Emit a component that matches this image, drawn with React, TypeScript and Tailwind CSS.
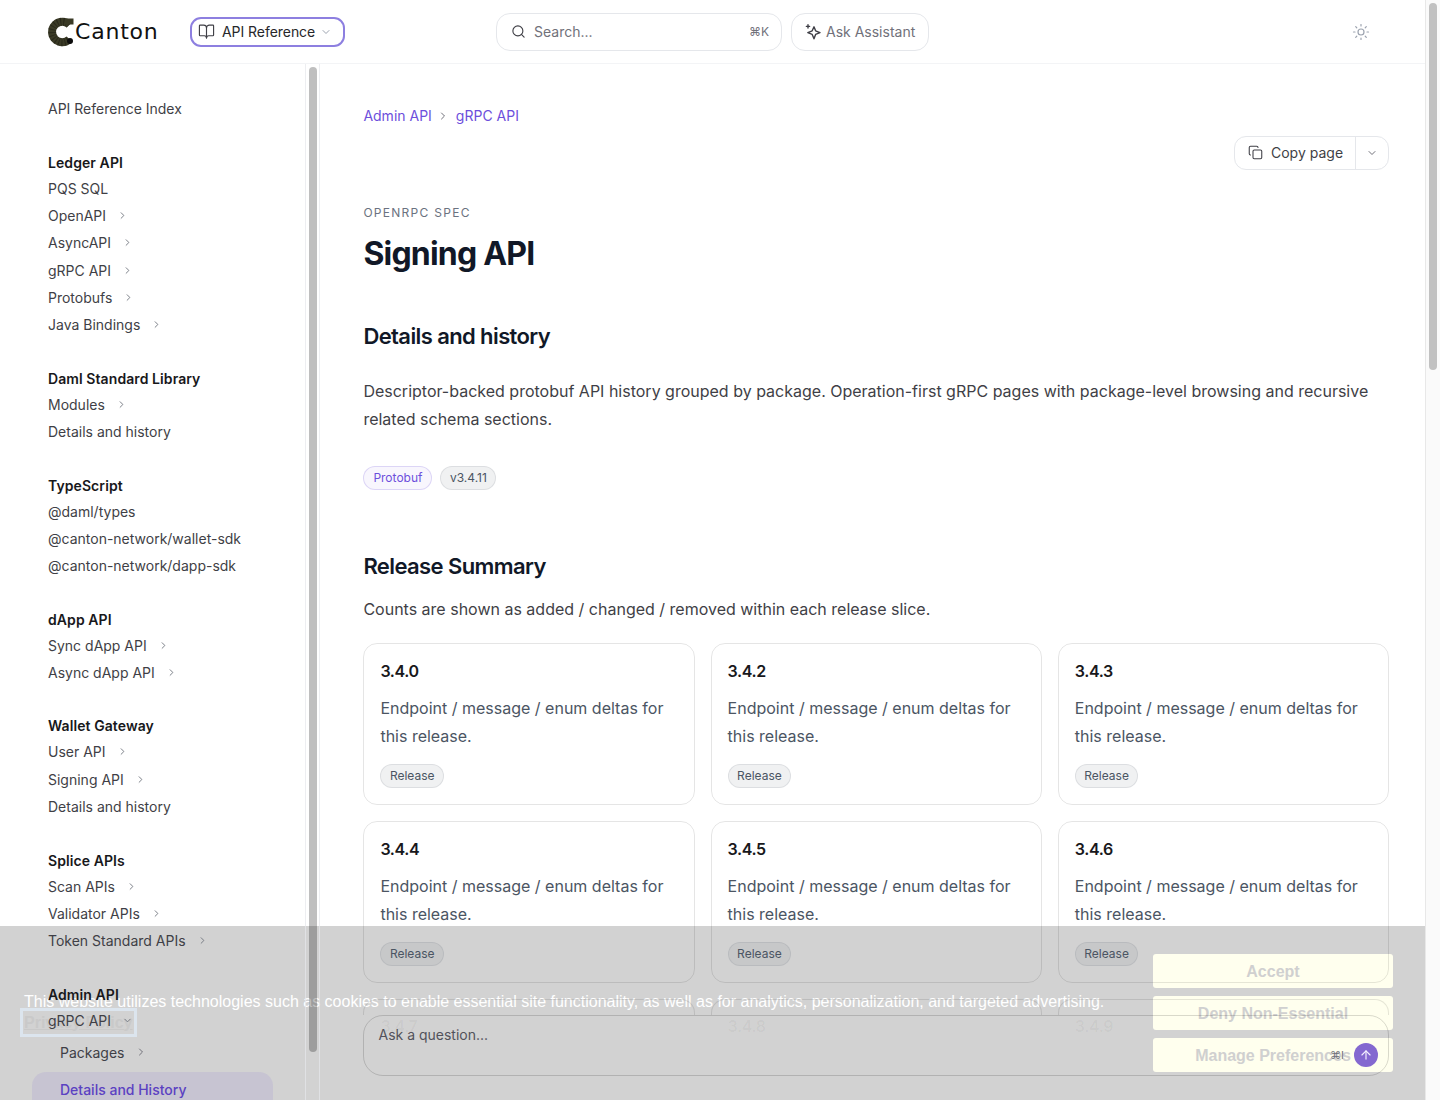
import { ArrowUp, BookOpen, ChevronDown, ChevronRight, Copy, Search, Sun } from "lucide-react";

type Item = { label: string; chev?: boolean };
type Section = { title: string; gap: string; items: Item[] };

const sections: Section[] = [
  { title: "Ledger API", gap: "mt-[27.7px]", items: [{ label: "PQS SQL" }, { label: "OpenAPI", chev: true }, { label: "AsyncAPI", chev: true }, { label: "gRPC API", chev: true }, { label: "Protobufs", chev: true }, { label: "Java Bindings", chev: true }] },
  { title: "Daml Standard Library", gap: "mt-[27.7px]", items: [{ label: "Modules", chev: true }, { label: "Details and history" }] },
  { title: "TypeScript", gap: "mt-[28.2px]", items: [{ label: "@daml/types" }, { label: "@canton-network/wallet-sdk" }, { label: "@canton-network/dapp-sdk" }] },
  { title: "dApp API", gap: "mt-[27.7px]", items: [{ label: "Sync dApp API", chev: true }, { label: "Async dApp API", chev: true }] },
  { title: "Wallet Gateway", gap: "mt-[27.2px]", items: [{ label: "User API", chev: true }, { label: "Signing API", chev: true }, { label: "Details and history" }] },
  { title: "Splice APIs", gap: "mt-[28.2px]", items: [{ label: "Scan APIs", chev: true }, { label: "Validator APIs", chev: true }, { label: "Token Standard APIs", chev: true }] },
];

function NavRow({ item }: { item: Item }) {
  return (
    <div className="flex h-[27.2px] items-center gap-[11px] text-[14px] text-[#3f3f46]">
      <span>{item.label}</span>
      {item.chev && <ChevronRight className="h-[11px] w-[11px] text-[#71757e]" strokeWidth={2} />}
    </div>
  );
}

function Heading({ children }: { children: string }) {
  return <div className="flex h-[24.8px] items-center text-[14px] font-semibold tracking-[0.08px] text-[#18181b]">{children}</div>;
}

function Logo() {
  return (
    <div className="flex items-center">
      <svg width="28" height="30" viewBox="0 0 28 30" fill="none" className="overflow-visible">
        <path d="M21.5 7.8 A10.2 10.2 0 1 0 21.5 22.2" stroke="#3a3a26" strokeWidth="8" fill="none" />
        <path d="M21.5 7.8 A10.2 10.2 0 1 0 21.5 22.2" stroke="#1b1b12" strokeWidth="8" strokeDasharray="1 2" fill="none" opacity="0.55" />
        <rect x="17" y="1.5" width="8.5" height="6" fill="#3a3a26" />
        <circle cx="22" cy="24" r="3" fill="#0d0d0d" />
      </svg>
      <span className="ml-[-1px] pt-[1px] font-['DejaVu_Sans'] text-[22px] leading-none tracking-[0.8px] text-[#111]">Canton</span>
    </div>
  );
}

function Header() {
  return (
    <header className="flex h-[64px] shrink-0 items-center border-b border-[#f3f4f6] bg-white pl-[48px]">
      <div className="w-[142px]"><Logo /></div>
      <button className="flex h-[30px] w-[155px] items-center rounded-[11px] border-2 border-[#8d7fe0] pl-[6px] text-[14px] tracking-[-0.05px] text-[#27272a]">
        <BookOpen className="h-[17px] w-[17px] text-[#3f3f46]" strokeWidth={1.6} />
        <span className="ml-[7px]">API Reference</span>
        <ChevronDown className="ml-[5px] h-[12px] w-[12px] text-[#9ca3af]" />
      </button>
      <div className="ml-[151px] flex h-[38px] w-[286px] items-center rounded-[14px] border border-[#e5e7eb] pl-[14px] pr-[12px] text-[14px] text-[#71717a]">
        <Search className="h-[15px] w-[15px] text-[#3f3f46]" strokeWidth={1.8} />
        <span className="ml-[8px] flex-1">Search...</span>
        <span className="text-[12px] text-[#71717a]">⌘K</span>
      </div>
      <div className="ml-[9px] flex h-[38px] w-[138px] items-center rounded-[14px] border border-[#e5e7eb] pl-[13px] text-[14px] text-[#71717a]">
        <svg width="16" height="16" viewBox="0 0 16 16" fill="none" stroke="#3f3f46" strokeWidth="1.4" strokeLinejoin="round" strokeLinecap="round">
          <path d="M9 2.8 L10.6 6.8 L15 8.6 L10.6 10.4 L9 14.8 L7.2 10.4 L2.8 8.6 L7.2 6.8 Z" />
          <path d="M3 0.8 V4 M1.4 2.4 H4.6" />
        </svg>
        <span className="ml-[5px]">Ask Assistant</span>
      </div>
      <Sun className="ml-[423px] h-[18px] w-[18px] text-[#9ca3af]" strokeWidth={1.6} />
    </header>
  );
}

function Sidebar() {
  return (
    <aside className="flex w-[320px] shrink-0 border-r border-[#e5e7eb]/70">
      <nav className="h-full w-[306px] shrink-0 overflow-hidden border-r border-[#e5e7eb]/70 pl-[48px] pt-[31.2px]">
        <div className="flex h-[27.2px] items-center text-[14px] text-[#3f3f46]">API Reference Index</div>
        {sections.map((s) => (
          <div key={s.title} className={s.gap}>
            <Heading>{s.title}</Heading>
            {s.items.map((i) => <NavRow key={i.label} item={i} />)}
          </div>
        ))}
        <div className="mt-[27.7px]">
          <Heading>Admin API</Heading>
          <NavRow item={{ label: "gRPC API" }} />
        </div>
        <div className="-mt-[27.2px] ml-[74px] flex h-[27.2px] items-center"><ChevronDown className="h-[11px] w-[11px] text-[#71757e]" /></div>
        <div className="flex h-[36.9px] items-center gap-[11px] pl-[12px] text-[14px] text-[#3f3f46]">
          <span>Packages</span>
          <ChevronRight className="h-[12px] w-[12px] text-[#71717a]" />
        </div>
        <div className="-ml-[16px] mt-px flex h-[44px] w-[241px] items-center rounded-[14px] bg-[#6d4fdc]/10 pb-[8px] pl-[28px] text-[14px] font-medium text-[#5b41c2]">Details and History</div>
      </nav>
      <div className="flex-1 pl-[2.5px] pt-[3px]">
        <div className="h-[985px] w-[8px] rounded-full bg-black/25" />
      </div>
    </aside>
  );
}

function Pill({ children }: { children: string }) {
  return <span className="inline-flex h-[24px] items-center rounded-full border border-[#6b7280]/15 bg-[#6b7280]/10 px-[8.5px] text-[12px] text-[#4b5563]">{children}</span>;
}

function Card({ v }: { v: string }) {
  return (
    <div className="h-[162px] rounded-[14px] border border-black/10 px-[16px] pt-[15px]">
      <div className="text-[16px] font-semibold leading-[24px] tracking-[-0.4px] text-[#18181b]">{v}</div>
      <p className="mt-[11px] text-[16px] leading-[28px] text-[#4b5563]">Endpoint / message / enum deltas for this release.</p>
      <div className="mt-[12px]"><Pill>Release</Pill></div>
    </div>
  );
}

function FadedCard({ v }: { v: string }) {
  return (
    <div className="h-[16px] rounded-t-[14px] border-x border-t border-black/10 px-[16px] pt-[14px]">
      <div className="text-[16px] font-semibold leading-[24px] tracking-[-0.4px] text-black/[0.04]">{v}</div>
    </div>
  );
}

function Main() {
  return (
    <main className="min-w-0 flex-1 pl-[43.4px] pr-[36px] pt-[41px]">
      <div className="flex h-[21px] items-center text-[14px] text-[#6d4fdc]">
        <span>Admin API</span>
        <ChevronRight className="ml-[5px] mr-[7px] h-[12px] w-[12px] text-[#71717a]" />
        <span>gRPC API</span>
      </div>
      <div className="mt-[10px] flex justify-end">
        <div className="flex h-[34px] w-[155px] items-center rounded-[12px] border border-[#e5e7eb] text-[14px] text-[#3f3f46]">
          <div className="flex h-full w-[121px] items-center border-r border-[#e5e7eb] pb-[1px] pl-[13px]">
            <Copy className="h-[15px] w-[15px] text-[#3f3f46]" strokeWidth={1.7} />
            <span className="ml-[8px]">Copy page</span>
          </div>
          <div className="flex flex-1 justify-center"><ChevronDown className="h-[12px] w-[12px] text-[#71717a]" /></div>
        </div>
      </div>
      <div className="mt-[35px] text-[12px] leading-[16px] tracking-[1.28px] text-[#6b7280]">OPENRPC SPEC</div>
      <h1 className="mt-[13px] text-[32px] font-bold leading-[40px] tracking-[-0.8px] text-[#111827]">Signing API</h1>
      <h2 className="mt-[48px] text-[22px] font-semibold leading-[28px] tracking-[-0.6px] text-[#111827]">Details and history</h2>
      <p className="mt-[27px] text-[16px] leading-[28px] text-[#3f3f46]">Descriptor-backed protobuf API history grouped by package. Operation-first gRPC pages with package-level browsing and recursive related schema sections.</p>
      <div className="mt-[33px] flex gap-[8px]">
        <span className="inline-flex h-[24px] items-center rounded-full border border-[#6d4fdc]/20 bg-[#6d4fdc]/5 px-[9px] text-[12px] text-[#6d4fdc]">Protobuf</span>
        <Pill>v3.4.11</Pill>
      </div>
      <h2 className="mt-[62px] text-[22px] font-semibold leading-[28px] tracking-[-0.6px] text-[#111827]">Release Summary</h2>
      <p className="mt-[15px] text-[16px] leading-[28px] text-[#3f3f46]">Counts are shown as added / changed / removed within each release slice.</p>
      <div className="mt-[20px] grid grid-cols-3 gap-x-[16px] gap-y-[16px]">
        {["3.4.0", "3.4.2", "3.4.3", "3.4.4", "3.4.5", "3.4.6"].map((v) => <Card key={v} v={v} />)}
        {["3.4.7", "3.4.8", "3.4.9"].map((v) => <FadedCard key={v} v={v} />)}
      </div>
    </main>
  );
}

function CookieBanner() {
  return (
    <div className="absolute bottom-0 left-0 right-0 z-0 flex h-[174px] items-center justify-between bg-[#d2d2d2] pl-[24px] pr-[32px] font-['Liberation_Sans',sans-serif]">
      <div className="pb-[2px] text-[16px] leading-[20px] text-white">
        <div>This website utilizes technologies such as cookies to enable essential site functionality, as well as for analytics, personalization, and targeted advertising.</div>
        <div><span className="inline-block font-bold leading-[21px] text-[#c9c9c9] underline outline outline-[3px] outline-offset-[1px] outline-[#dce5ee]">Privacy Policy</span></div>
      </div>
      <div className="flex w-[240px] shrink-0 flex-col gap-[8px]">
        {["Accept", "Deny Non-Essential", "Manage Preferences"].map((b) => (
          <button key={b} className="h-[34px] rounded-[3px] bg-[#ffffee] pt-[2px] text-[16px] font-bold text-[#d0d0d0]">{b}</button>
        ))}
      </div>
    </div>
  );
}

function ChatBox() {
  return (
    <div className="absolute bottom-[24px] left-[363px] z-20 flex h-[61px] w-[1026px] items-start justify-between rounded-[20px] border border-black/15 pl-[14.5px] pr-[10px] pt-[9px]">
      <span className="text-[14px] leading-[20px] text-[#52525b]">Ask a question...</span>
      <div className="mt-[18px] flex items-center gap-[10px]">
        <span className="text-[11px] text-[#71717a]">⌘I</span>
        <div className="flex h-[24px] w-[24px] items-center justify-center rounded-full bg-[#8468d0]">
          <ArrowUp className="h-[14px] w-[14px] text-[#f4f0ff]" strokeWidth={2} />
        </div>
      </div>
    </div>
  );
}

export default function App() {
  return (
    <div className="flex h-[1100px] w-full overflow-hidden bg-white font-['Inter',sans-serif]">
      <div className="relative flex min-w-0 flex-1 flex-col">
        <CookieBanner />
        <div className="relative z-10 flex min-h-0 flex-1 flex-col">
          <Header />
          <div className="flex min-h-0 flex-1">
            <Sidebar />
            <Main />
          </div>
        </div>
        <ChatBox />
      </div>
      <div className="w-[15px] shrink-0 border-l border-[#e8e8e8] bg-[#fafafa] pl-[3px] pt-[3px]">
        <div className="h-[367px] w-[8px] rounded-full bg-[#c1c1c1]" />
      </div>
    </div>
  );
}
